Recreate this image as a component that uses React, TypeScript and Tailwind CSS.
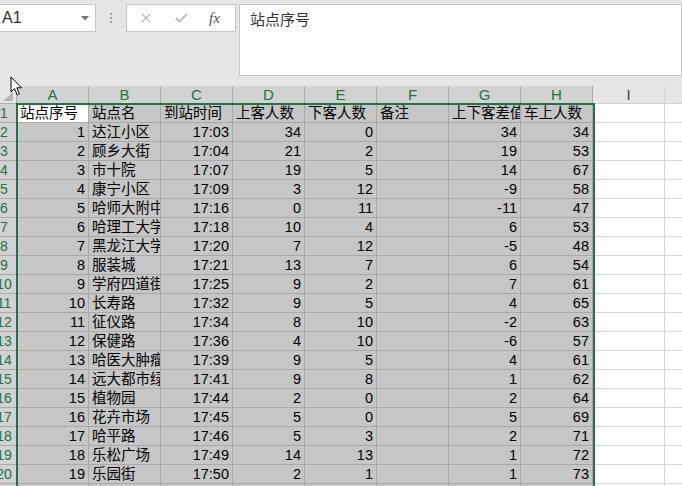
import React from 'react';

type Cell = string | number;

const data: Cell[][] = [
  ['站点序号', '站点名', '到站时间', '上客人数', '下客人数', '备注', '上下客差值', '车上人数'],
  [1, '达江小区', '17:03', 34, 0, '', 34, 34],
  [2, '顾乡大街', '17:04', 21, 2, '', 19, 53],
  [3, '市十院', '17:07', 19, 5, '', 14, 67],
  [4, '康宁小区', '17:09', 3, 12, '', -9, 58],
  [5, '哈师大附中', '17:16', 0, 11, '', -11, 47],
  [6, '哈理工大学', '17:18', 10, 4, '', 6, 53],
  [7, '黑龙江大学', '17:20', 7, 12, '', -5, 48],
  [8, '服装城', '17:21', 13, 7, '', 6, 54],
  [9, '学府四道街', '17:25', 9, 2, '', 7, 61],
  [10, '长寿路', '17:32', 9, 5, '', 4, 65],
  [11, '征仪路', '17:34', 8, 10, '', -2, 63],
  [12, '保健路', '17:36', 4, 10, '', -6, 57],
  [13, '哈医大肿瘤医院', '17:39', 9, 5, '', 4, 61],
  [14, '远大都市绿洲', '17:41', 9, 8, '', 1, 62],
  [15, '植物园', '17:44', 2, 0, '', 2, 64],
  [16, '花卉市场', '17:45', 5, 0, '', 5, 69],
  [17, '哈平路', '17:46', 5, 3, '', 2, 71],
  [18, '乐松广场', '17:49', 14, 13, '', 1, 72],
  [19, '乐园街', '17:50', 2, 1, '', 1, 73],
  [20, '', '', '', '', '', '', ''],
];

const cols = ['A', 'B', 'C', 'D', 'E', 'F', 'G', 'H'];

function isRight(v: Cell) {
  return typeof v === 'number' || /^\d+:\d+$/.test(v);
}

function Cursor() {
  return (
    <svg className="absolute left-[10px] top-[76px]" width="14" height="21" viewBox="0 0 14 21">
      <path d="M1 1 L1 16 L4.5 12.5 L7.2 18.8 L9.4 17.8 L6.8 11.8 L11.5 11.8 Z" fill="#fff" stroke="#000" strokeWidth="1" strokeLinejoin="round" />
    </svg>
  );
}

export default function App() {
  return (
    <div className="relative h-[486px] w-[682px] overflow-hidden bg-white font-['Liberation_Sans','Noto_Sans_CJK_SC',sans-serif] text-[14.5px] text-black">
      {/* Formula bar */}
      <div className="flex h-[86px] items-start bg-[#e6e6e6] pt-1">
        <div className="-ml-px flex h-[28px] w-[97px] shrink-0 items-center justify-between border border-[#c6c6c6] bg-white pl-[2px] pr-[6px]">
          <span className="text-[16px] text-[#333]">A1</span>
          <svg width="8" height="5" viewBox="0 0 8 5">
            <path d="M0 0 L8 0 L4 4.5 Z" fill="#777" />
          </svg>
        </div>
        <div className="flex w-[30px] shrink-0 flex-col items-center gap-[2px] pt-[9px]">
          <span className="h-[2px] w-[2px] bg-[#a6a6a6]" />
          <span className="h-[2px] w-[2px] bg-[#a6a6a6]" />
          <span className="h-[2px] w-[2px] bg-[#a6a6a6]" />
        </div>
        <div className="flex h-[28px] w-[110px] shrink-0 items-center border border-[#c6c6c6] bg-[#fdfdfd]">
          <svg className="ml-[14px]" width="10" height="10" viewBox="0 0 10 10">
            <path d="M1 1 L9 9 M9 1 L1 9" stroke="#bdbdbd" strokeWidth="1.4" />
          </svg>
          <svg className="ml-[24px]" width="13" height="10" viewBox="0 0 13 10">
            <path d="M1 5 L4.5 8.5 L12 1" stroke="#bdbdbd" strokeWidth="1.8" fill="none" />
          </svg>
          <span className="ml-[21px] font-['Liberation_Serif',serif] text-[15px] italic text-[#555]">fx</span>
        </div>
        <div className="ml-[3px] h-[72px] flex-1 border border-[#c6c6c6] bg-white pl-[10px] pt-[4px] text-[15px] text-[#333]">
          站点序号
        </div>
      </div>

      {/* Column headers */}
      <div className="flex h-[18px]">
        <div className="relative w-[17px] shrink-0 border-b border-r border-[#ababab] bg-[#e6e6e6]">
          <svg className="absolute bottom-[2px] right-[3px]" width="10" height="9" viewBox="0 0 10 9">
            <path d="M10 0 L10 9 L0 9 Z" fill="#b4b4b4" />
          </svg>
        </div>
        {cols.map((c) => (
          <div
            key={c}
            className="flex w-[72px] shrink-0 items-center justify-center border-b border-r border-[#ababab] bg-[#d2d2d2] text-[15px] leading-none text-[#217346]"
          >
            {c}
          </div>
        ))}
        <div className="flex w-[72px] shrink-0 items-center justify-center border-b border-r border-[#d4d4d4] bg-[#e6e6e6] text-[15px] leading-none text-[#444]">
          I
        </div>
        <div className="flex-1 border-b border-[#d4d4d4] bg-[#e6e6e6]" />
      </div>

      {/* Rows */}
      {data.map((row, r) => (
        <div key={r} className="flex h-[19px]">
          <div className="w-[17px] shrink-0 overflow-hidden border-b border-r border-[#ababab] bg-[#d2d2d2]">
            <div className="-ml-[9px] w-[26px] text-center text-[14px] leading-[18px] text-[#217346]">{r + 1}</div>
          </div>
          {row.map((v, c) => (
            <div
              key={c}
              className={
                (r === 0 && c === 0 ? 'bg-white ' : 'bg-[#c6c6c6] ') +
                (isRight(v) ? 'text-right ' : 'text-left ') +
                'w-[72px] shrink-0 overflow-hidden whitespace-nowrap border-b border-r border-[#a9a9a9] px-[3px] leading-[18px]'
              }
            >
              {v}
            </div>
          ))}
          <div className="w-[72px] shrink-0 border-b border-r border-[#d4d4d4]" />
          <div className="flex-1 border-b border-[#d4d4d4]" />
        </div>
      ))}

      {/* Selection border */}
      <div className="pointer-events-none absolute left-[16px] top-[103px] h-[400px] w-[579px] border-2 border-[#217346]" />

      <Cursor />
    </div>
  );
}
